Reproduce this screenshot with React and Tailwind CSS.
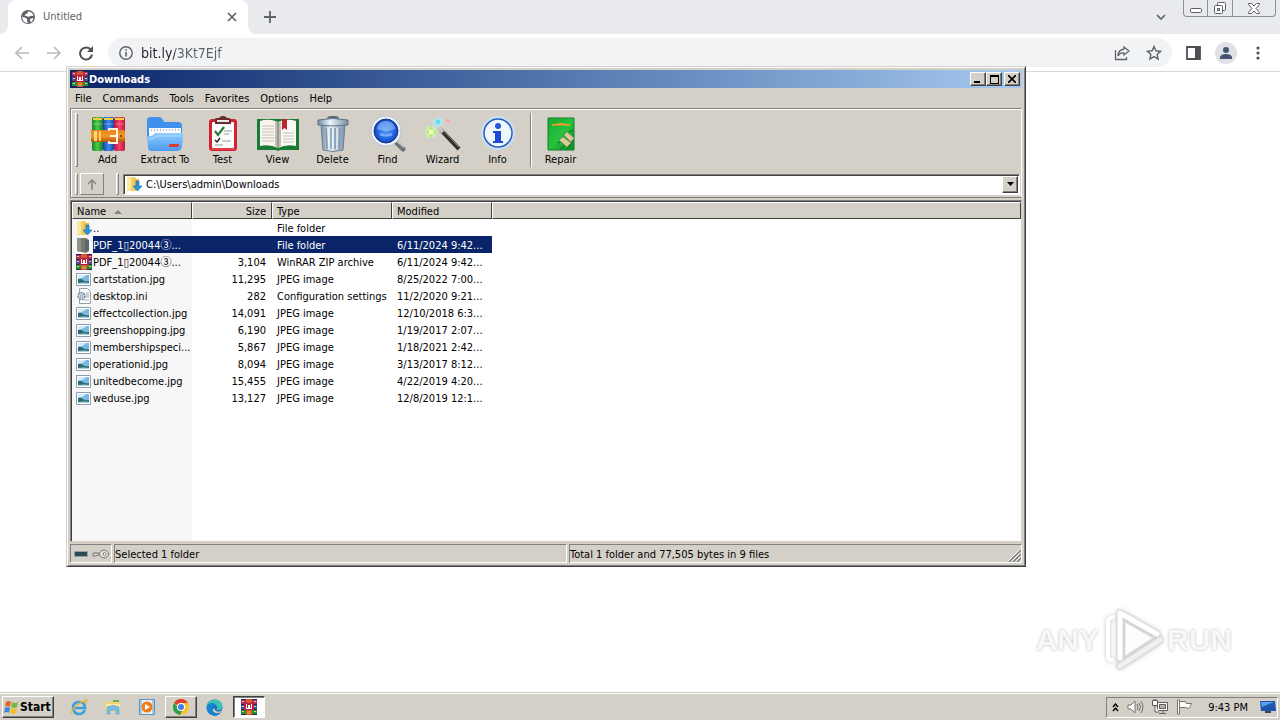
import { useState } from "react";

const menuItems = ["File", "Commands", "Tools", "Favorites", "Options", "Help"];

const archiveName = (
    <>
        PDF_1▯20044<span className="font-['Noto_Sans_CJK_JP',sans-serif] leading-none">③</span>...
    </>
);

const initialFiles = [
    { icon: "up", name: "..", size: "", type: "File folder", modified: "" },
    { icon: "folder", name: archiveName, size: "", type: "File folder", modified: "6/11/2024 9:42..." },
    { icon: "rar", name: archiveName, size: "3,104", type: "WinRAR ZIP archive", modified: "6/11/2024 9:42..." },
    { icon: "image", name: "cartstation.jpg", size: "11,295", type: "JPEG image", modified: "8/25/2022 7:00..." },
    { icon: "ini", name: "desktop.ini", size: "282", type: "Configuration settings", modified: "11/2/2020 9:21..." },
    { icon: "image", name: "effectcollection.jpg", size: "14,091", type: "JPEG image", modified: "12/10/2018 6:3..." },
    { icon: "image", name: "greenshopping.jpg", size: "6,190", type: "JPEG image", modified: "1/19/2017 2:07..." },
    { icon: "image", name: "membershipspeci...", size: "5,867", type: "JPEG image", modified: "1/18/2021 2:42..." },
    { icon: "image", name: "operationid.jpg", size: "8,094", type: "JPEG image", modified: "3/13/2017 8:12..." },
    { icon: "image", name: "unitedbecome.jpg", size: "15,455", type: "JPEG image", modified: "4/22/2019 4:20..." },
    { icon: "image", name: "weduse.jpg", size: "13,127", type: "JPEG image", modified: "12/8/2019 12:1..." },
];

const raised = "border border-t-white border-l-white border-r-[#404040] border-b-[#404040] bg-[#d4d0c8] shadow-[inset_-1px_-1px_0_#808080]";
const sunken = "border border-t-[#808080] border-l-[#808080] border-r-white border-b-white";

/* ---------- toolbar icons, 36px high ---------- */

function AddIcon() {
    return (
        <svg width="36" height="36" viewBox="0 0 36 36">
            <defs>
                <linearGradient id="bookG"><stop offset="0" stopColor="#15852a" /><stop offset=".5" stopColor="#4ccb4c" /><stop offset="1" stopColor="#157a2a" /></linearGradient>
                <linearGradient id="bookB"><stop offset="0" stopColor="#1544a8" /><stop offset=".5" stopColor="#3c8cf0" /><stop offset="1" stopColor="#1646a4" /></linearGradient>
                <linearGradient id="bookR"><stop offset="0" stopColor="#b3123c" /><stop offset=".5" stopColor="#f8426a" /><stop offset="1" stopColor="#b4163c" /></linearGradient>
                <linearGradient id="belt" x2="0" y2="1"><stop offset="0" stopColor="#e8821a" /><stop offset=".5" stopColor="#f49a28" /><stop offset="1" stopColor="#b5520c" /></linearGradient>
            </defs>
            <rect x="2" y="1" width="11" height="34" rx="2" fill="url(#bookG)" />
            <rect x="13" y="1" width="11" height="34" rx="2" fill="url(#bookB)" />
            <rect x="24" y="1" width="11" height="34" rx="2" fill="url(#bookR)" />
            <path d="M3 3h9M14 3h9M25 3h9" stroke="#f5d23c" strokeWidth="2" />
            <path d="M3 8h9M14 8h9M25 8h9" stroke="#fff" strokeOpacity=".35" />
            <rect x="1" y="14" width="34" height="12" rx="1" fill="url(#belt)" />
            <rect x="4" y="15" width="3" height="10" fill="#ffd878" />
            <rect x="9" y="15" width="2" height="10" fill="#ffcf62" />
            <path d="M19 15v-2h8v14h-8v-2M20 20h6" fill="none" stroke="#fff2e0" strokeWidth="2" />
            <circle cx="31" cy="20" r="1" fill="#6b3000" />
        </svg>
    );
}

function ExtractIcon() {
    return (
        <svg width="38" height="36" viewBox="0 0 38 36">
            <defs>
                <linearGradient id="fold" x2="0" y2="1"><stop offset="0" stopColor="#8fcdff" /><stop offset="1" stopColor="#4a9af0" /></linearGradient>
            </defs>
            <path d="M1 8V4q0-3 4-3h8q3 0 5 5h14q4 0 4 4v11H1z" fill="#3f91ec" />
            <path d="M3 12h32v11H3z" fill="#f9fbff" />
            <path d="M5 14h28" stroke="#aebfd4" strokeDasharray="1 2" strokeWidth="2" />
            <path d="M1 20q3 1 6-1l2-2h26q2 0 2 3l-1 11q-1 4-5 4H6q-4 0-4-4z" fill="url(#fold)" />
            <path d="M3 23q4 1 8-3h24" fill="none" stroke="#b4dcff" />
            <rect x="23" y="28" width="10" height="3" rx="1" fill="#d93a32" />
        </svg>
    );
}

function TestIcon() {
    return (
        <svg width="32" height="36" viewBox="0 0 32 36">
            <rect x="2" y="3" width="28" height="32" rx="3" fill="#cf2233" />
            <rect x="5" y="6" width="22" height="26" rx="1" fill="#fbfbfa" />
            <path d="M8 3q0-1 2-1h2q1-2 4-2t4 2h2q2 0 2 2v4H8z" fill="#6b2930" />
            <path d="M10 4h12v2H10z" fill="#f2e4e4" />
            <path d="m8 15 3 4 6-8" fill="none" stroke="#2b7b3c" strokeWidth="2.2" />
            <path d="M17 15h8M17 18h5M15 25h9M8 29h8" stroke="#9a9a9a" />
            <path d="m8 24 2 2 3-4" fill="none" stroke="#1c1c1c" strokeWidth="1.4" />
            <path d="M4 33h24" stroke="#f15a66" />
        </svg>
    );
}

function ViewIcon() {
    return (
        <svg width="42" height="36" viewBox="0 0 42 36">
            <path d="M0 3h42v31H23l-2 1-2-1H0z" fill="#177a35" />
            <path d="M3 5q9-3 18 1v26q-8-4-18-2z" fill="#f8f6ee" />
            <path d="M39 5q-9-3-18 1v26q8-4 18-2z" fill="#fbf9f2" />
            <path d="M18 5q2 1 3 2 1-1 3-2v25q-2 1-3 2-1-1-3-2z" fill="#c2bfb4" />
            <path d="M21 6v27" stroke="#77756c" />
            <path d="M5 10h12M5 13h12M5 16h12M5 19h12M5 22h12M5 25h12M26 17h11M26 20h11M26 23h11M26 26h11" stroke="#c3c0b6" />
            <path d="M25 3h5v11l-2.500-2L25 14z" fill="#b82530" />
        </svg>
    );
}

function DeleteIcon() {
    return (
        <svg width="32" height="36" viewBox="0 0 32 36">
            <defs>
                <linearGradient id="bin"><stop offset="0" stopColor="#71889c" /><stop offset=".4" stopColor="#edf5fa" /><stop offset="1" stopColor="#748da4" /></linearGradient>
            </defs>
            <path d="M11 3q0-2 3-2h4q3 0 3 2" fill="none" stroke="#596674" strokeWidth="2" />
            <path d="M4 9h24l-2 25q-10 3-20 0z" fill="url(#bin)" stroke="#6a8096" />
            <path d="M1 4q15-3 30 0v5q-15 2-30 0z" fill="url(#bin)" stroke="#5f758a" />
            <path d="m9 12 1 21M14 12v21M18 12v21M23 12l-1 21" stroke="#7c98b3" strokeWidth="1.500" />
            <path d="m11 12 1 21M16 12v21M20 12v21" stroke="#f4f9fc" />
        </svg>
    );
}

function FindIcon() {
    return (
        <svg width="38" height="36" viewBox="0 0 38 36">
            <defs>
                <radialGradient id="lens"><stop offset="0" stopColor="#5b9cf8" /><stop offset=".7" stopColor="#2465df" /><stop offset="1" stopColor="#1241ad" /></radialGradient>
            </defs>
            <path d="m26 25 8 8" stroke="#6f7379" strokeWidth="5" strokeLinecap="round" />
            <path d="m27 24 8 7" stroke="#c2c7cb" strokeWidth="2" />
            <circle cx="17" cy="15" r="15" fill="#eff4fa" stroke="#b3c4da" />
            <circle cx="17" cy="15" r="12" fill="url(#lens)" stroke="#173a91" />
            <path d="M8 13q1-8 9-8t9 8q-9 4-18 0z" fill="#a2caff" opacity=".55" />
            <path d="M11 18q6 3 12 0" fill="none" stroke="#79b0ff" strokeWidth="2" />
        </svg>
    );
}

function WizardIcon() {
    return (
        <svg width="38" height="36" viewBox="0 0 38 36">
            <circle cx="14" cy="6" r="5" fill="#aeeff5" opacity=".7" />
            <circle cx="7" cy="16" r="6" fill="#d0f5ae" opacity=".75" />
            <circle cx="14" cy="6" r="2.500" fill="#5fe0f0" />
            <path d="m7 10 2 4 4 2-4 2-2 4-2-4-4-2 4-2z" fill="#a6ea68" />
            <circle cx="7" cy="16" r="2.500" fill="#f6ffc0" />
            <path d="m24 2 1 2 2 1-2 1-1 2-1-2-2-1 2-1z" fill="#f3a9b2" />
            <path d="m17 14 18 19" stroke="#34302c" strokeWidth="4" />
            <path d="m18 13 17 18" stroke="#98938c" />
            <path d="m15 12 4 4" stroke="#c3c2c4" strokeWidth="4" />
        </svg>
    );
}

function InfoIcon() {
    return (
        <svg width="36" height="36" viewBox="0 0 36 36">
            <circle cx="18" cy="17" r="17" fill="#c9def5" />
            <circle cx="18" cy="17" r="14" fill="#f0f6fd" stroke="#285eb8" strokeWidth="1.500" />
            <circle cx="18" cy="10" r="3" fill="#2458d3" />
            <path d="M13 15h8v10h2v2H13v-2h2v-8h-2z" fill="#1b4bd2" />
        </svg>
    );
}

function RepairIcon() {
    return (
        <svg width="28" height="36" viewBox="0 0 28 36">
            <defs>
                <linearGradient id="rep" x2="1" y2="1"><stop offset="0" stopColor="#16a932" /><stop offset=".5" stopColor="#27c23e" /><stop offset="1" stopColor="#128a29" /></linearGradient>
            </defs>
            <path d="M1 2h26v32H1z" fill="url(#rep)" stroke="#118028" />
            <path d="M5 9q9-3 18 0z" fill="#ff9b28" stroke="#ff9b28" />
            <path d="m22 16 4-2M13 34l5-5M11 27l4-2M20 33l6-8" stroke="#0c6b1e" fill="none" />
            <path d="m12 24 4-3 8 6-4 4zM17 19l3-3 7 6-3 4z" fill="#dcc9a0" stroke="#8c8a50" strokeWidth=".6" />
        </svg>
    );
}

const toolbar = [
    { label: "Add", Icon: AddIcon },
    { label: "Extract To", Icon: ExtractIcon },
    { label: "Test", Icon: TestIcon },
    { label: "View", Icon: ViewIcon },
    { label: "Delete", Icon: DeleteIcon },
    { label: "Find", Icon: FindIcon },
    { label: "Wizard", Icon: WizardIcon },
    { label: "Info", Icon: InfoIcon },
];

/* ---------- small icons ---------- */

function RarIcon() {
    return (
        <svg width="16" height="16" viewBox="0 0 16 16" className="shrink-0" shapeRendering="crispEdges">
            <path d="M0 1h16v4H0z" fill="#b02a6c" />
            <path d="M0 6h16v4H0z" fill="#2f55c4" />
            <path d="M0 11h16v4H0z" fill="#23913c" />
            <path d="M0 0h16v1H0zM0 5h16v1H0zM0 10h16v1H0zM0 15h16v1H0z" fill="#2a2440" />
            <path d="M1 2h2v1H1zM1 7h2v1H1zM1 12h2v1H1zM13 2h2v1h-2zM13 7h2v1h-2zM13 12h2v1h-2z" fill="#ecd052" />
            <path d="M5 0h6v16H5z" fill="#d2562c" />
            <path d="M3 4h10v7H3z" fill="#b81f3c" />
            <path d="M5 5h1v4h4V5h1v5H5zM7 6h2v3H7z" fill="#fff" />
            <path d="M6 12h4v3H6z" fill="#d98a3a" />
        </svg>
    );
}

function UpFolderIcon() {
    return (
        <svg width="16" height="16" viewBox="0 0 16 16" className="shrink-0">
            <path d="M1 1h7l2 1v13H1z" fill="#f2cf63" />
            <path d="M1 1h4v14l-4-1z" fill="#fbe9a0" />
            <path d="M8 3h5v11H8z" fill="#e6be50" />
            <path d="M10 5h3v5h3l-4.500 5L7 10h3z" fill="#2c93dc" stroke="#1769ab" strokeWidth=".6" />
        </svg>
    );
}

function FolderIcon() {
    return (
        <svg width="16" height="16" viewBox="0 0 16 16" className="shrink-0">
            <path d="M1 1h9l3 2v11l-3 2-9-2z" fill="#77796f" />
            <path d="M1 1h4v14l-4-1z" fill="#8f918a" />
            <path d="M9 3h4v11H9z" fill="#5d6672" />
        </svg>
    );
}

function ImageIcon() {
    return (
        <svg width="16" height="16" viewBox="0 0 16 16" className="shrink-0">
            <path d="M.5 2.500h14v12H.5z" fill="#fff" stroke="#8c9db0" />
            <path d="M2 4h11v9H2z" fill="#7ab8e4" />
            <path d="M2 4h8q-2 3-8 4z" fill="#d3ebf8" />
            <path d="M2 8q3-1 5 1t6 1v3H2z" fill="#2d6b70" />
            <path d="M2 12q6-1 11 0v1H2z" fill="#a8d2e2" />
        </svg>
    );
}

function IniIcon() {
    return (
        <svg width="16" height="16" viewBox="0 0 16 16" className="shrink-0">
            <path d="M3.500.5h8l3 3v12h-11z" fill="#fbfbfb" stroke="#98a0a8" />
            <path d="M10 5h3M10 7h3M10 9h3M8 12h5" stroke="#a4acb5" />
            <circle cx="5.500" cy="8" r="3.500" fill="#c5d5e5" stroke="#70869c" strokeWidth="1.500" strokeDasharray="2 1" />
            <circle cx="5.500" cy="8" r="1.200" fill="#fff" stroke="#70869c" strokeWidth=".7" />
        </svg>
    );
}

const fileIcons = { up: UpFolderIcon, folder: FolderIcon, rar: RarIcon, image: ImageIcon, ini: IniIcon };

function Gripper() {
    return <span className="w-[3px] shrink-0 self-stretch border border-t-white border-l-white border-r-[#808080] border-b-[#808080]" />;
}

/* ---------- browser ---------- */

function Browser() {
    const [url, setUrl] = useState("bit.ly/3Kt7Ejf");

    return (
        <header className="border-b border-[#d5d7da] bg-white text-[#5f6368]">
            <div className="flex h-[34px] items-stretch bg-[#e8eaed]">
                <div className="flex w-2 bg-white">
                    <span className="flex-1 rounded-br-lg bg-[#e8eaed]" />
                </div>
                <div className="flex w-60 items-center rounded-t-lg bg-white pr-2 pl-3">
                    <svg width="16" height="16" viewBox="0 0 16 16">
                        <circle cx="8" cy="8" r="7" fill="#5f6368" />
                        <path d="M2 8q2 0 4 1t1 3l1 2q-5 0-6-6zM8 2.500q4 0 5.500 4-2 1-3 0-1 2-3 1t-3-1q1-2 3-2z" fill="#fff" />
                        <path d="M10 10q2-1 3.500-.5-1 3-3 4z" fill="#fff" />
                    </svg>
                    <span className="ml-[7px] flex-1 text-[11px]">Untitled</span>
                    <button type="button" aria-label="Close tab" className="flex size-4 items-center justify-center">
                        <svg width="10" height="10" viewBox="0 0 10 10"><path d="m1 1 8 8M9 1 1 9" stroke="#5f6368" strokeWidth="1.700" /></svg>
                    </button>
                </div>
                <div className="flex w-2 bg-white">
                    <span className="flex-1 rounded-bl-lg bg-[#e8eaed]" />
                </div>
                <button type="button" aria-label="New tab" className="flex w-7 items-center justify-center">
                    <svg width="12" height="12" viewBox="0 0 12 12"><path d="M6 0v12M0 6h12" stroke="#5f6368" strokeWidth="1.800" /></svg>
                </button>
                <button type="button" aria-label="Search tabs" className="ml-auto flex w-11 items-center justify-center">
                    <svg width="10" height="6" viewBox="0 0 10 6"><path d="m1 1 4 4 4-4" fill="none" stroke="#5f6368" strokeWidth="1.700" /></svg>
                </button>
                <div className="mr-1 flex h-[17px] rounded-b border border-t-0 border-[#8b9096]">
                    <button type="button" aria-label="Minimize browser" className="flex w-6 items-end justify-center border-r border-[#8b9096] pb-[3px]">
                        <svg width="12" height="5" viewBox="0 0 12 5"><rect x=".5" y=".5" width="11" height="4" rx="1" fill="#fff" stroke="#5a5f66" /></svg>
                    </button>
                    <button type="button" aria-label="Restore browser" className="flex w-[25px] items-center justify-center border-r border-[#8b9096]">
                        <svg width="14" height="14" viewBox="0 0 14 14" fill="#fff" stroke="#5a5f66">
                            <rect x="4.500" y="1.500" width="8" height="8" rx="1" />
                            <rect x="1.500" y="4.500" width="8" height="8" rx="1" />
                            <rect x="4.500" y="7.500" width="2" height="2" />
                        </svg>
                    </button>
                    <button type="button" aria-label="Close browser" className="flex w-[42px] items-center justify-center">
                        <svg width="12" height="11" viewBox="0 0 12 11"><path d="M.5.5h3L6 3 8.500.5h3v1L8 5.500l3.500 4v1h-3L6 8l-2.500 2.500h-3v-1L4 5.500.5 1.500z" fill="#fff" stroke="#5a5f66" /></svg>
                    </button>
                </div>
            </div>

            <div className="flex h-[37px] items-center">
                <div className="flex w-[108px] items-center justify-between pr-[14px] pl-[14px]">
                    <button type="button" aria-label="Back">
                        <svg width="16" height="14" viewBox="0 0 16 14" fill="none" stroke="#b9bbbe" strokeWidth="1.700"><path d="M15 7H2M8 1 2 7l6 6" /></svg>
                    </button>
                    <button type="button" aria-label="Forward">
                        <svg width="16" height="14" viewBox="0 0 16 14" fill="none" stroke="#b9bbbe" strokeWidth="1.700"><path d="M1 7h13M8 1l6 6-6 6" /></svg>
                    </button>
                    <button type="button" aria-label="Reload">
                        <svg width="16" height="16" viewBox="0 0 16 16"><path d="M13 5A6 6 0 1 0 14 9.500" fill="none" stroke="#4d5156" strokeWidth="2" /><path d="M15 1v6H9z" fill="#4d5156" /></svg>
                    </button>
                </div>
                <div className="flex h-[29px] flex-1 items-center rounded-full bg-[#f1f3f4] pr-[10px] pl-[11px]">
                    <svg width="14" height="14" viewBox="0 0 14 14"><circle cx="7" cy="7" r="6.200" fill="none" stroke="#5f6368" strokeWidth="1.400" /><path d="M7 6v4.500M7 3.300v1.500" stroke="#5f6368" strokeWidth="1.600" /></svg>
                    <input
                        aria-label="Address"
                        value={url}
                        onChange={(e) => setUrl(e.target.value)}
                        className="ml-2 min-w-0 flex-1 bg-[linear-gradient(90deg,#202124_34px,#5f6368_34px)] bg-clip-text text-sm text-transparent caret-black outline-none"
                    />
                    <button type="button" aria-label="Share" className="mr-4">
                        <svg width="16" height="16" viewBox="0 0 16 16" fill="none" stroke="#5f6368" strokeWidth="1.300"><path d="M1.500 5v9.500h11V12M10 2l5 4-5 4V8Q6 7 4 11q0-6 6-7z" /></svg>
                    </button>
                    <button type="button" aria-label="Bookmark">
                        <svg width="16" height="16" viewBox="0 0 16 16"><path d="m8 1.500 1.900 4.300 4.700.5-3.500 3.100 1 4.600L8 11.600 3.900 14l1-4.600-3.500-3.100 4.700-.5z" fill="none" stroke="#5f6368" strokeWidth="1.400" /></svg>
                    </button>
                </div>
                <div className="flex items-center pr-[14px] pl-[14px]">
                    <button type="button" aria-label="Side panel">
                        <svg width="15" height="14" viewBox="0 0 15 14"><path d="M1 1h13v12H1z" fill="none" stroke="#4d5156" strokeWidth="1.800" /><path d="M9 1h5v12H9z" fill="#4d5156" /></svg>
                    </button>
                    <button type="button" aria-label="Profile" className="mr-[13px] ml-[14px] flex size-[22px] items-center justify-center rounded-full bg-[#dfe1e5]">
                        <svg width="12" height="12" viewBox="0 0 12 12" fill="#465372"><circle cx="6" cy="3" r="3" /><path d="M0 12v-2q1-3 6-3t6 3v2z" /></svg>
                    </button>
                    <button type="button" aria-label="Browser menu" className="flex w-4 justify-center">
                        <svg width="4" height="14" viewBox="0 0 4 14" fill="#4d5156"><circle cx="2" cy="2" r="1.600" /><circle cx="2" cy="7" r="1.600" /><circle cx="2" cy="12" r="1.600" /></svg>
                    </button>
                </div>
            </div>
        </header>
    );
}

/* ---------- archive manager window ---------- */

function FileRow({ file, on, onSelect }) {
    const Icon = fileIcons[file.icon];
    const cell = "whitespace-nowrap pt-0.5 " + (on ? "bg-[#0a246a] text-white" : "");

    return (
        <tr onClick={onSelect}>
            <td className="bg-[#f7f7f7] pl-1">
                <span className="flex h-[17px] items-center">
                    <Icon />
                    <span className={"ml-px h-[17px] flex-1 whitespace-nowrap pt-0.5 " + (on ? "bg-[#0a246a] text-white" : "")}>
                        {file.name}
                    </span>
                </span>
            </td>
            <td className={cell + " pr-1.5 text-right"}>{file.size}</td>
            <td className={cell + " pl-[5px]"}>{file.type}</td>
            <td className={cell + " pl-[5px]"}>{file.modified}</td>
            <td />
        </tr>
    );
}

function FileTable() {
    const [selected, setSelected] = useState(1);
    const th = "h-[17px] border border-t-white border-l-white border-r-[#404040] border-b-[#404040] bg-[#d4d0c8] pt-0.5 pr-[5px] pl-1 font-normal leading-[13px]";

    return (
        <div className="mt-0.5 flex min-h-[342px] flex-col border border-t-[#808080] border-l-[#808080] border-r-[#d4d0c8] border-b-[#d4d0c8] bg-white pt-px pl-px shadow-[inset_1px_1px_0_#404040]">
            <table className="w-full table-fixed border-separate border-spacing-0 text-left leading-[15px]">
                <colgroup>
                    <col className="w-[120px]" />
                    <col className="w-20" />
                    <col className="w-[120px]" />
                    <col className="w-[100px]" />
                    <col />
                </colgroup>
                <thead>
                    <tr>
                        <th className={th}>
                            <span className="flex items-center gap-2">
                                Name
                                <svg width="8" height="4" viewBox="0 0 8 4"><path d="m4 0 4 4H0z" fill="#87837b" /></svg>
                            </span>
                        </th>
                        <th className={th + " text-right"}>Size</th>
                        <th className={th}>Type</th>
                        <th className={th}>Modified</th>
                        <th className={th} aria-label="Spare" />
                    </tr>
                </thead>
                <tbody>
                    {initialFiles.map((file, i) => (
                        <FileRow key={i} file={file} on={selected === i} onSelect={() => setSelected(i)} />
                    ))}
                </tbody>
            </table>
            <div className="w-[120px] flex-1 bg-[#f7f7f7]" />
        </div>
    );
}

function ArchiveWindow() {
    const [path, setPath] = useState("C:\\Users\\admin\\Downloads");

    return (
        <section className="absolute top-[66px] left-[66px] w-3/4 border border-t-[#d4d0c8] border-l-[#d4d0c8] border-r-[#404040] border-b-[#404040] bg-[#d4d0c8] p-[3px] shadow-[inset_1px_1px_0_#fff,inset_-1px_-1px_0_#808080]">
            <div className="flex h-[18px] items-center bg-linear-to-r from-[#0a246a] to-[#a6caf0] pr-0.5 pl-0.5 text-white">
                <RarIcon />
                <h1 className="ml-px flex-1 pt-0.5 font-bold">Downloads</h1>
                <button type="button" aria-label="Minimize" className={raised + " flex h-[14px] w-4 items-end pb-0.5 pl-[3px]"}>
                    <svg width="6" height="2"><path d="M0 0h6v2H0z" /></svg>
                </button>
                <button type="button" aria-label="Maximize" className={raised + " flex h-[14px] w-4 items-center justify-center"}>
                    <svg width="9" height="9"><path d="M0 0h9v9H0zM1 2v6h7V2z" fillRule="evenodd" /></svg>
                </button>
                <button type="button" aria-label="Close" className={raised + " ml-0.5 flex h-[14px] w-4 items-center justify-center"}>
                    <svg width="8" height="8" viewBox="0 0 8 8"><path d="m0 0 8 8M8 0 0 8" stroke="#000" strokeWidth="1.600" /></svg>
                </button>
            </div>

            <nav className="flex h-5 items-center gap-[11px] pt-0.5 pl-[5px]">
                {menuItems.map((item) => (
                    <button key={item} type="button">{item}</button>
                ))}
            </nav>

            <div className="border border-t-[#808080] border-l-[#808080] border-r-white border-b-[#808080] shadow-[inset_1px_1px_0_#fff]">
                <div className="flex h-[62px] items-stretch px-1 py-1">
                    <Gripper />
                    <div className="flex pl-0.5">
                        {toolbar.map(({ label, Icon }) => (
                            <button
                                key={label}
                                type="button"
                                className={"flex flex-col items-center gap-px whitespace-nowrap pt-[3px] leading-[14px] " + (label === "Extract To" ? "w-[60px]" : "w-[55px]")}
                            >
                                <Icon />
                                {label}
                            </button>
                        ))}
                    </div>
                    <span className="mr-px ml-[5px] w-0.5 border-l border-[#808080] bg-white" />
                    <button type="button" className="flex w-[55px] flex-col items-center gap-px pt-[3px] leading-[14px]">
                        <RepairIcon />
                        Repair
                    </button>
                </div>
                <div className="flex h-[26px] items-center py-0.5 pr-px pl-1">
                    <Gripper />
                    <button type="button" aria-label="Up one level" className="ml-0.5 flex h-[22px] w-6 items-center justify-center border border-t-white border-l-white border-r-[#808080] border-b-[#808080]">
                        <svg width="10" height="11" viewBox="0 0 10 11"><path d="M5 11V1M1 5l4-4 4 4" fill="none" stroke="#8a8780" strokeWidth="1.600" /></svg>
                    </button>
                    <span className="w-3" />
                    <Gripper />
                    <div className="ml-1 flex h-[21px] min-w-0 flex-1 items-center border border-t-[#808080] border-l-[#808080] border-r-white border-b-white bg-white p-px pl-0.5 shadow-[inset_1px_1px_0_#404040]">
                        <UpFolderIcon />
                        <input
                            aria-label="Folder path"
                            value={path}
                            onChange={(e) => setPath(e.target.value)}
                            className="ml-1 min-w-0 flex-1 bg-transparent pt-0.5 outline-none"
                        />
                        <button type="button" aria-label="Show folders" className={raised + " flex h-[17px] w-4 items-center justify-center"}>
                            <svg width="7" height="4"><path d="M0 0h7L3.500 4z" /></svg>
                        </button>
                    </div>
                </div>
            </div>

            <FileTable />

            <footer className="mt-0.5 flex h-[19px] gap-0.5 leading-[16px]">
                <div className={sunken + " flex w-[42px] items-center justify-center gap-1"}>
                    <svg width="14" height="6" viewBox="0 0 14 6"><rect width="14" height="6" rx="1" fill="#8fa2a8" /><path d="M1 1h12v4H1z" fill="#2e4a53" /></svg>
                    <svg width="17" height="10" viewBox="0 0 17 10"><path d="M1 4h8M1 4v3h3l1-1h4" fill="#d9d7d2" stroke="#77756f" /><ellipse cx="12" cy="5" rx="4.500" ry="3.800" fill="#e6e4df" stroke="#77756f" /><circle cx="12.500" cy="5" r="1.500" fill="#fff" stroke="#77756f" /></svg>
                </div>
                <div className={sunken + " w-[453px] pt-0.5"}>Selected 1 folder</div>
                <div className={sunken + " flex flex-1 justify-between pt-0.5"}>
                    <span>Total 1 folder and 77,505 bytes in 9 files</span>
                    <svg width="13" height="13" viewBox="0 0 13 13" className="self-end"><path d="m1 13 12-12M5 13l8-8M9 13l4-4" stroke="#808080" strokeWidth="1.500" /><path d="m0 12 12-12M4 12l8-8M8 12l4-4" stroke="#fff" /></svg>
                </div>
            </footer>
        </section>
    );
}

/* ---------- desktop ---------- */

function Watermark() {
    return (
        <div className="absolute right-12 bottom-5 flex items-center gap-1 font-['Liberation_Sans',sans-serif] text-[30px] leading-none font-bold text-[#f8f8f8] [text-shadow:0_0_3px_#b8b8b8]">
            <span>ANY</span>
            <svg width="60" height="64" viewBox="0 0 60 64" fill="none" strokeLinejoin="round" className="drop-shadow-[0_0_2px_#c4c4c4]">
                <path d="M12 9q-7 0-7 5v34q0 5 6 4" stroke="#fff" strokeWidth="4" />
                <path d="M17 50V5l37 21M57 32 17 58" stroke="#d9d9d9" strokeWidth="7" strokeLinecap="round" />
                <path d="M17 50V5l37 21" stroke="#fff" strokeWidth="5" strokeLinecap="round" />
                <path d="M57 32 17 58" stroke="#f1f1f1" strokeWidth="5" strokeLinecap="round" />
                <path d="M22 14v34l28-18z" fill="#fdfdfd" stroke="#dedede" />
            </svg>
            <span>RUN</span>
        </div>
    );
}

function Taskbar() {
    return (
        <footer className="flex h-7 items-center border-t border-[#c9c9c2] bg-[#d4d0c8] px-0.5 pt-[3px] pb-0.5 shadow-[inset_0_1px_0_#fff]">
            <button type="button" className={raised + " flex h-[22px] w-[52px] items-center gap-px text-xs font-bold"}>
                <svg width="16" height="16" viewBox="0 0 16 16" className="shrink-0">
                    <path d="M3 3q3-2 5 0L7 8Q4 6 2 8z" fill="#e8602c" />
                    <path d="M9 3q3 2 6 0l-1 5q-3 2-6 0z" fill="#76b83c" />
                    <path d="M2 9q3-2 5 0l-1 5q-3-2-5 0z" fill="#3c86d8" />
                    <path d="M8 9q3 2 6 0l-1 5q-3 2-6 0z" fill="#f6bd2c" />
                </svg>
                Start
            </button>
            <div className="ml-2 flex h-[22px] items-center">
                <button type="button" aria-label="Internet Explorer" className="flex w-[34px] justify-center">
                    <svg width="18" height="18" viewBox="0 0 18 18" fill="none">
                        <path d="M15 12q-2 4-6 4-5 0-6-6 0-6 6-6 6 0 6 6H5" stroke="#37a0e0" strokeWidth="2.600" />
                        <path d="M2 16q-2-3 4-8t11-6q0 2-2 4" stroke="#eeb63c" strokeWidth="1.400" />
                    </svg>
                </button>
                <button type="button" aria-label="Windows Explorer" className="flex w-[34px] justify-center">
                    <svg width="18" height="18" viewBox="0 0 18 18">
                        <path d="M1 4h6l1-2h8v11H1z" fill="#f0d274" />
                        <path d="M2 6h14v6H2z" fill="#f9eaa9" />
                        <path d="M9 2h6v2H9z" fill="#63b562" />
                        <path d="M3 16V9q6-3 12 0v7h-3v-4H6v4z" fill="#77bfe6" stroke="#5799c5" strokeWidth=".6" />
                    </svg>
                </button>
                <button type="button" aria-label="Media Player" className="flex w-[34px] justify-center">
                    <svg width="16" height="16" viewBox="0 0 16 16">
                        <path d="M.5.5h15v15H.5z" fill="#a4cce9" stroke="#5f92be" />
                        <path d="M3 1h10v14H3z" fill="#e6f1f8" />
                        <circle cx="8" cy="8" r="5.500" fill="#f27d16" />
                        <path d="m6 5 5 3-5 3z" fill="#fff" />
                    </svg>
                </button>
                <button type="button" aria-label="Chrome" className={raised + " ml-px flex h-[22px] w-8 items-center justify-center"}>
                    <svg width="16" height="16" viewBox="0 0 16 16">
                        <circle cx="8" cy="8" r="8" fill="#f7c52c" />
                        <path d="M8 8 1 4A8 8 0 0 1 15 4z" fill="#df3f32" />
                        <path d="M1 4A8 8 0 0 0 7 16l3-6-4-1z" fill="#2c9f50" />
                        <path d="M8 4h7q1 2 1 4l-5 1z" fill="#f7c52c" />
                        <circle cx="8" cy="8" r="4" fill="#fff" />
                        <circle cx="8" cy="8" r="3" fill="#3b7de9" />
                    </svg>
                </button>
                <button type="button" aria-label="Edge" className="flex w-[34px] justify-center">
                    <svg width="17" height="17" viewBox="0 0 17 17">
                        <circle cx="8.500" cy="8.500" r="8" fill="#1470bd" />
                        <path d="M.5 8Q1 .5 8.500.5T16.500 8q-1 4-6 3 2-3-1-5T.5 8z" fill="#3cc2b4" />
                        <path d="M.5 8q1-4 5-4 5 0 5 4-1-2-3-1-3 1-1 5 2 4 7 3-5 4-9 0-4-3-4-7z" fill="#1785d3" />
                        <path d="M9 8q-2 2 1 4t6-1q-2 4-6 3t-3-4z" fill="#d4d0c8" />
                    </svg>
                </button>
                <button type="button" aria-label="WinRAR" className="ml-0.5 flex h-[22px] w-8 items-center justify-center border border-t-[#404040] border-l-[#404040] border-r-white border-b-white bg-white shadow-[inset_1px_1px_0_#808080]">
                    <RarIcon />
                </button>
            </div>

            <div className={sunken + " ml-auto flex h-[21px] items-center gap-2 pr-px pl-[5px]"}>
                <button type="button" aria-label="Show hidden icons">
                    <svg width="7" height="9" viewBox="0 0 7 9" fill="none" stroke="#000" strokeWidth="1.400"><path d="m1 4 2.500-3L6 4M1 8l2.500-3L6 8" /></svg>
                </button>
                <svg width="17" height="14" viewBox="0 0 17 14" fill="none" stroke="#77746e"><path d="M1 5h3l4-4v12L4 9H1z" fill="#fff" /><path d="M10 4q2 3 0 6M12 3q3 4 0 8M14 1q4 6 0 12" /></svg>
                <svg width="16" height="16" viewBox="0 0 16 16" fill="#fff" stroke="#605d58"><path d="M5.500 3.500h10v8h-10z" /><path d="M7.500 5.500h6v4h-6z" fill="#b5b2ac" /><path d="M7 14.500h7M11 12v2M3 6v7h4" /><path d="M.5 1.500h5v5h-5zM2 0v2M4 0v2" /></svg>
                <svg width="16" height="16" viewBox="0 0 16 16" fill="#fff" stroke="#77746e"><path d="M1.500 1h2v14h-2z" /><path d="M3.500 2.500h6l1 2h5q-1 3-3 5l-3-1h-6z" /></svg>
                <time className="ml-2 pt-0.5">9:43 PM</time>
                <button type="button" aria-label="Show desktop" className="ml-1">
                    <svg width="16" height="14" viewBox="0 0 16 14"><path d="M0 1h15l1 10H1z" fill="#1c55ad" /><path d="M1 2h13L2 7z" fill="#5f9eea" /><path d="M5 11h6v2H5z" fill="#384761" /></svg>
                </button>
            </div>
        </footer>
    );
}

export default function App() {
    return (
        <div className="relative flex min-h-screen flex-col bg-white font-['DejaVu_Sans_Condensed','DejaVu_Sans',sans-serif] text-[11px] text-black">
            <Browser />
            <main className="relative flex-1">
                <Watermark />
            </main>
            <ArchiveWindow />
            <Taskbar />
        </div>
    );
}
